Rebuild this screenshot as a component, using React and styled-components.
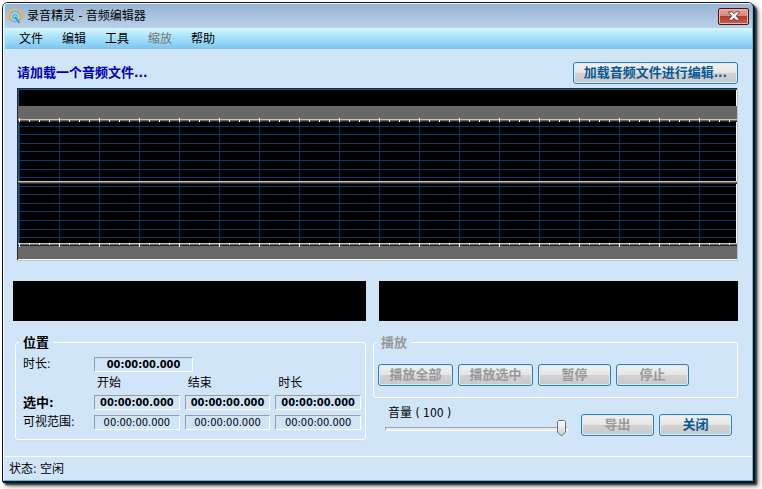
import React, { useState } from 'react';
import styled, { createGlobalStyle, css } from 'styled-components';

const GlobalStyle = createGlobalStyle`
  * {
    box-sizing: border-box;
  }

  body {
    margin: 0;
    background: #ffffff;
    color: #000000;
    font: 12px/16px "DejaVu Sans Condensed", "Noto Sans", "Noto Sans CJK SC", sans-serif;
  }

  button, input {
    font: inherit;
  }
`;

const Window = styled.div`
  margin: 2px 8px 7px 2px;
  border: 1px solid #101418;
  border-radius: 6px 6px 0 0;
  background: #d1e5f9;
  box-shadow: 1px 1px 0 #101010, 3px 3px 2px #303030, 4px 4px 5px rgba(0, 0, 0, 0.5);
`;

const Frame = styled.div`
  border: 1px solid #40c4ec;
  border-top-color: #f4f9fd;
  border-left-color: #f4f9fd;
  border-radius: 5px 5px 0 0;
  padding-left: 1px;
  overflow: hidden;
`;

const TitleBar = styled.header`
  display: flex;
  align-items: center;
  gap: 4px;
  height: 24px;
  padding: 0 3px 0 2px;
  background: linear-gradient(#98b4d3, #b9d1ea);
`;

const Title = styled.h1`
  flex: 1;
  margin: 0;
  font-size: 12px;
  font-weight: 400;
`;

const CloseBox = styled.button`
  display: flex;
  align-items: center;
  justify-content: center;
  width: 31px;
  height: 17px;
  padding: 0;
  border: 1px solid #47141f;
  border-radius: 2px;
  background: linear-gradient(#e8a59b 0%, #d98478 48%, #b83a26 50%, #c8604a 100%);
  box-shadow: inset 0 0 0 1px #eab4aa;
`;

const MenuBar = styled.nav`
  display: flex;
  gap: 19px;
  height: 21px;
  padding: 0 14px;
  background: linear-gradient(#d8f7fe 0%, #a5e2fa 45%, #7cc5ef 100%);
`;

const MenuItem = styled.button`
  padding: 0;
  border: 0;
  background: none;
  color: #000000;

  &:disabled {
    color: #747474;
  }
`;

const Main = styled.main`
  padding: 13px 14px 16px 8px;
`;

const Heading = styled.div`
  display: flex;
  align-items: center;
  justify-content: space-between;
  padding-left: 4px;
`;

const Prompt = styled.h2`
  margin: 0;
  color: #0000b0;
  font-size: 13px;
  line-height: 22px;
`;

const Button = styled.button`
  min-width: ${(props) => (props.$wide ? '75px' : '73px')};
  height: 22px;
  padding: 0 10px;
  border: 1px solid #1f83c6;
  border-radius: 3px;
  background: linear-gradient(#f0f0f0 0%, #e6e6e6 48%, #d2d2d2 50%, #c9c9c9 100%);
  box-shadow: inset 0 0 0 1px #e4e9ec;
  color: #075a98;
  font-size: 13px;
  font-weight: 700;
  line-height: 20px;
  white-space: nowrap;

  &:disabled {
    color: #999999;
  }
`;

const Waveform = styled.svg`
  display: block;
  width: calc(100% - 4px);
  height: 173px;
  margin: 4px 0 20px 4px;
`;

const Meters = styled.div`
  display: grid;
  grid-template-columns: 353fr 359fr;
  gap: 13px;
`;

const Meter = styled.div`
  height: 40px;
  background: #000000;
`;

const Panels = styled.div`
  display: grid;
  grid-template-columns: 351fr 365fr;
  gap: 7px;
  margin: 13px 0 0 2px;
`;

const Group = styled.fieldset`
  min-width: 0;
  margin: 0;
  padding: 0 3px;
  border: 1px solid #ffffff;
  border-radius: 3px;
  box-shadow: 0 1px 0 #d9dde0;
`;

const GroupBody = styled.div`
  padding: ${(props) => props.$padding};
`;

const Legend = styled.legend`
  padding: 0 4px;
  font-size: 13px;
  font-weight: 700;
  line-height: 17px;
  color: ${(props) => (props.$dim ? '#999999' : '#000000')};
`;

const Times = styled.div`
  display: grid;
  grid-template-columns: 66px 1fr 1fr 1fr;
  align-items: center;
  gap: 5px;
`;

const Total = styled.div`
  display: grid;
  grid-template-columns: 66px 99px;
  gap: 5px;
  margin-bottom: 5px;
`;

const TimeField = styled.input`
  width: 100%;
  min-width: 0;
  height: 15px;
  padding: 0;
  border: 1px solid #ffffff;
  border-top-color: #989ca2;
  border-left-color: #989ca2;
  background: transparent;
  color: #000000;
  font-size: 11px;
  font-weight: ${(props) => (props.$strong ? 700 : 400)};
  line-height: 13px;
  text-align: center;
`;

const FieldLabel = styled.label`
  line-height: 15px;
  white-space: nowrap;
  ${(props) =>
    props.$strong &&
    css`
      font-size: 13px;
      font-weight: 700;
    `}
`;

const ColumnName = styled.span`
  padding-left: 3px;
  line-height: 13px;
`;

const ButtonRow = styled.div`
  display: flex;
  gap: 5px;
`;

const Footer = styled.div`
  display: flex;
  align-items: flex-start;
  justify-content: space-between;
  padding: 8px 6px 0 12px;
`;

const FooterButtons = styled(ButtonRow)`
  padding-top: 8px;
`;

const Volume = styled.div`
  width: 183px;
`;

const VolumeLabel = styled.label`
  display: block;
  padding-left: 3px;
  line-height: 14px;
`;

const thumb = encodeURIComponent(
  '<svg xmlns="http://www.w3.org/2000/svg" width="11" height="17"><defs><linearGradient id="g" x2="0" y2="1"><stop stop-color="#fff"/><stop offset="1" stop-color="#ccc"/></linearGradient></defs><path d="M2.500 .5h6l1 1v10.500l-4 4-4-4V1.500z" fill="url(#g)" stroke="#6c7074"/></svg>'
);

const Slider = styled.input`
  display: block;
  width: 100%;
  height: 17px;
  margin: 0;
  appearance: none;
  background: none;

  &::-webkit-slider-runnable-track {
    height: 4px;
    border: 1px solid #ffffff;
    border-top-color: #a3a6a8;
    border-left-color: #a3a6a8;
    background: #e7eaea;
  }

  &::-webkit-slider-thumb {
    appearance: none;
    width: 11px;
    height: 17px;
    margin-top: -8px;
    background: url("data:image/svg+xml,${thumb}") no-repeat;
  }
`;

const StatusBar = styled.footer`
  padding: 4px 4px 3px;
  border-top: 1px solid #ffffff;
`;

const gridRows = [38, 46, 55, 63, 72, 81, 89, 98, 106, 115, 123, 132, 141, 149];

const Logo = () => (
  <svg width="16" height="16" viewBox="0 0 16 16" fill="none" aria-hidden="true">
    <circle cx="8" cy="8.500" r="5" fill="#b9e0f2" stroke="#5fb4de" strokeWidth="1.500" />
    <circle cx="8" cy="8.500" r="2.500" fill="#83cdec" stroke="#3f9fd2" />
    <path d="M8 9l4.500 6" stroke="#2c8fcb" strokeWidth="1.600" />
    <path d="M2 8C2 3.500 4.500 1.200 8 1.200S14 3.500 14 8" stroke="#f0b458" strokeWidth="1.600" />
    <path d="M2 6.500v4M14 6.500v4" stroke="#f4ae3e" strokeWidth="3.200" strokeLinecap="round" />
  </svg>
);

const CloseIcon = () => (
  <svg width="12" height="10" viewBox="0 0 12 10" aria-hidden="true">
    <path
      d="M.8.800h3.400L6 2.800 7.800.8h3.400v1.200L8.200 5l3 3v1.200H7.800L6 7.200 4.200 9.200H.8V8l3-3-3-3z"
      fill="#f5f5f5"
      stroke="#5a4650"
    />
  </svg>
);

const WaveformView = () => (
  <Waveform role="img" aria-label="波形" shapeRendering="crispEdges">
    <defs>
      <pattern id="columns" x="2" width="40" height="173" patternUnits="userSpaceOnUse">
        <rect width="1" height="173" fill="#0b345e" />
      </pattern>
      <pattern id="topTicks" x="2" y="30" width="40" height="4" patternUnits="userSpaceOnUse">
        <path d="M0 0h1v4H0zM10 2h1v2h-1zM20 2h1v2h-1zM30 2h1v2h-1z" fill="#ffffff" />
      </pattern>
      <pattern id="bottomTicks" x="2" y="155" width="40" height="4" patternUnits="userSpaceOnUse">
        <path d="M0 0h1v4H0zM10 0h1v2h-1zM20 0h1v2h-1zM30 0h1v2h-1z" fill="#ffffff" />
      </pattern>
    </defs>
    <rect width="100%" height="100%" fill="#000000" />
    <rect y="34" width="100%" height="121" fill="url(#columns)" />
    {gridRows.map((y) => (
      <rect key={y} x="2" y={y} width="100%" height="1" fill="#0b3b6c" />
    ))}
    <rect width="100%" height="1" fill="#26292c" />
    <rect y="1" width="100%" height="1" fill="#145388" />
    <rect width="1" height="100%" fill="#26292c" />
    <rect x="1" y="1" width="1" height="170" fill="#145f9e" />

    <rect x="1" y="18" width="100%" height="13" fill="#686868" />
    <rect x="1" y="31" width="100%" height="1" fill="#c2c2c2" />
    <rect x="1" y="32" width="100%" height="1" fill="#686868" />
    <rect x="1" y="33" width="100%" height="1" fill="#242424" />
    <rect x="1" y="30" width="100%" height="4" fill="url(#topTicks)" />

    <rect x="1" y="93" width="100%" height="1" fill="#c8c8c8" />
    <rect x="1" y="94" width="100%" height="1" fill="#686868" />
    <rect x="1" y="95" width="100%" height="1" fill="#303030" />

    <rect x="1" y="155" width="100%" height="1" fill="#c2c2c2" />
    <rect x="1" y="156" width="100%" height="1" fill="#686868" />
    <rect x="1" y="157" width="100%" height="1" fill="#242424" />
    <rect x="1" y="158" width="100%" height="13" fill="#686868" />
    <rect x="1" y="155" width="100%" height="4" fill="url(#bottomTicks)" />
    <rect x="1" y="171" width="100%" height="1" fill="#ffffff" />
    <rect y="172" width="100%" height="1" fill="#c2c2c2" />
    <svg x="100%" overflow="visible">
      <path d="M-2 2h1v16h-1zM-2 34h1v59h-1zM-2 96h1v59h-1z" fill="#ffffff" />
      <rect x="-1" width="1" height="173" fill="#c0c0c0" />
    </svg>
  </Waveform>
);

const menus = [
  { name: '文件' },
  { name: '编辑' },
  { name: '工具' },
  { name: '缩放', disabled: true },
  { name: '帮助' },
];

const columns = ['开始', '结束', '时长'];

const ZERO = '00:00:00.000';

const TimeRow = ({ id, label, strong }) => (
  <>
    <FieldLabel htmlFor={id} $strong={strong}>{label}</FieldLabel>
    {columns.map((column, index) => (
      <TimeField
        key={column}
        id={index === 0 ? id : undefined}
        aria-label={`${label} ${column}`}
        $strong={strong}
        value={ZERO}
        readOnly
      />
    ))}
  </>
);

const App = () => {
  const [volume, setVolume] = useState(100);

  return (
    <>
      <GlobalStyle />
      <Window>
        <Frame>
          <TitleBar>
            <Logo />
            <Title>录音精灵 - 音频编辑器</Title>
            <CloseBox aria-label="关闭窗口">
              <CloseIcon />
            </CloseBox>
          </TitleBar>
          <MenuBar>
            {menus.map((menu) => (
              <MenuItem key={menu.name} disabled={menu.disabled}>{menu.name}</MenuItem>
            ))}
          </MenuBar>
          <Main>
            <Heading>
              <Prompt>请加载一个音频文件...</Prompt>
              <Button>加载音频文件进行编辑...</Button>
            </Heading>
            <WaveformView />
            <Meters>
              <Meter />
              <Meter />
            </Meters>
            <Panels>
              <Group>
                <Legend>位置</Legend>
                <GroupBody $padding="6px 1px 9px 4px">
                  <Total>
                    <FieldLabel htmlFor="total">时长:</FieldLabel>
                    <TimeField id="total" $strong value={ZERO} readOnly />
                  </Total>
                  <Times>
                    <span />
                    {columns.map((column) => (
                      <ColumnName key={column}>{column}</ColumnName>
                    ))}
                    <TimeRow id="selected" label="选中:" strong />
                    <TimeRow id="visible" label="可视范围:" />
                  </Times>
                </GroupBody>
              </Group>
              <div>
                <Group>
                  <Legend $dim>播放</Legend>
                  <GroupBody $padding="13px 1px 11px">
                    <ButtonRow>
                      <Button $wide disabled>播放全部</Button>
                      <Button $wide disabled>播放选中</Button>
                      <Button disabled>暂停</Button>
                      <Button disabled>停止</Button>
                    </ButtonRow>
                  </GroupBody>
                </Group>
                <Footer>
                  <Volume>
                    <VolumeLabel htmlFor="volume">音量 ( {volume} )</VolumeLabel>
                    <Slider
                      id="volume"
                      type="range"
                      value={volume}
                      onChange={(e) => setVolume(e.target.value)}
                    />
                  </Volume>
                  <FooterButtons>
                    <Button disabled>导出</Button>
                    <Button>关闭</Button>
                  </FooterButtons>
                </Footer>
              </div>
            </Panels>
          </Main>
          <StatusBar>状态: 空闲</StatusBar>
        </Frame>
      </Window>
    </>
  );
};

export default App;
